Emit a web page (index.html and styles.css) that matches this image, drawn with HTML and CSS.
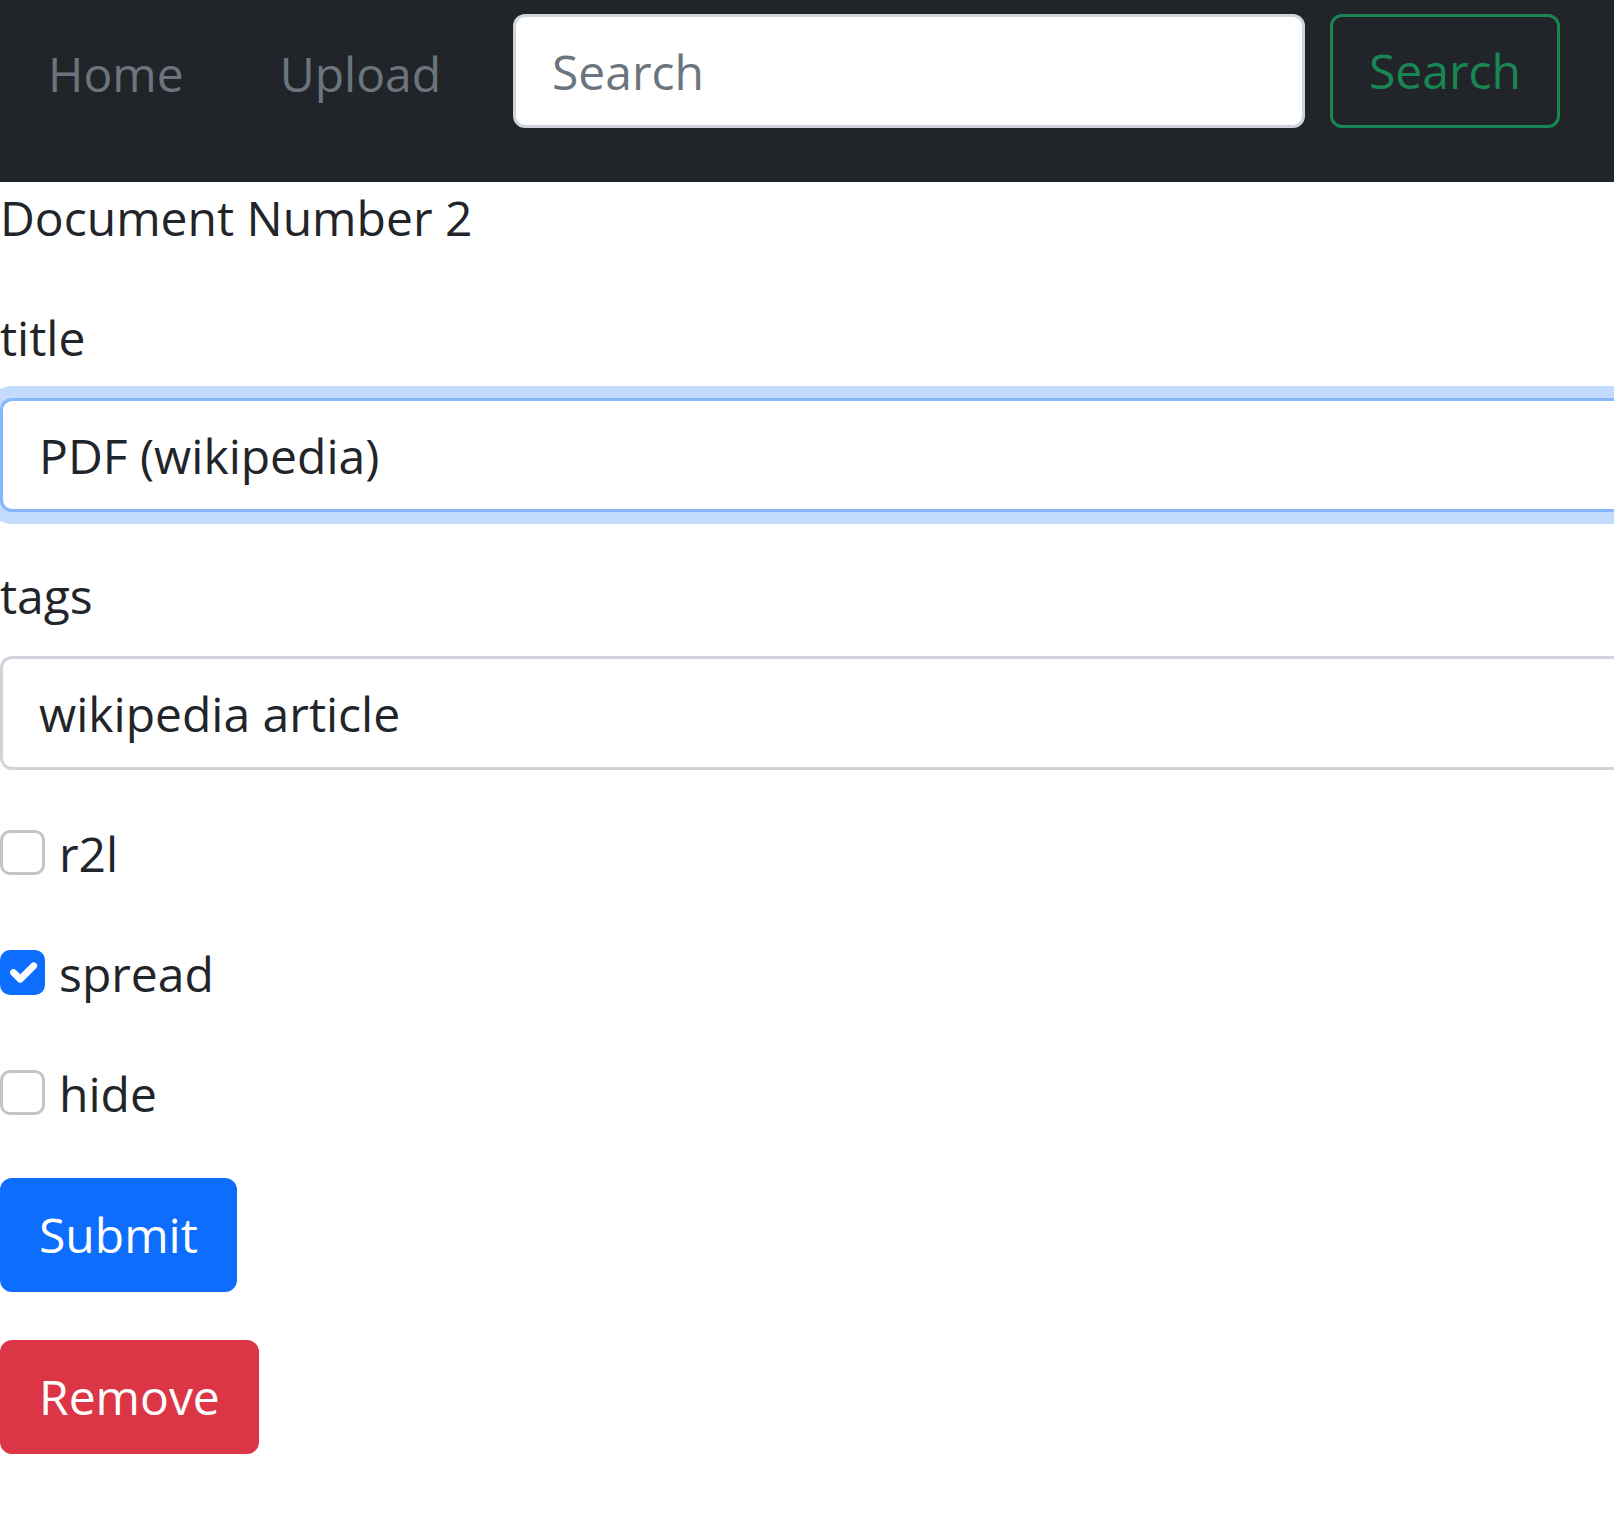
FILE: index.html
```html
<!DOCTYPE html>
<html lang="en">
<head>
<meta charset="utf-8">
<title>Document Number 2</title>
<link rel="stylesheet" href="styles.css">
</head>
<body>
<nav class="navbar">
  <a class="nav-link" href="#">Home</a>
  <a class="nav-link" href="#">Upload</a>
  <form class="search-form">
    <input class="form-control search-input" type="search" placeholder="Search">
    <button class="btn btn-outline-success" type="button">Search</button>
  </form>
</nav>
<main class="main">
  <div class="doc-title">Document Number 2</div>
  <form class="edit-form">
    <div class="field">
      <label class="form-label" for="title">title</label>
      <input class="form-control wide is-focused" id="title" type="text" value="PDF (wikipedia)">
    </div>
    <div class="field">
      <label class="form-label" for="tags">tags</label>
      <input class="form-control wide" id="tags" type="text" value="wikipedia article">
    </div>
    <div class="check">
      <span class="check-box"></span>
      <span class="check-label">r2l</span>
    </div>
    <div class="check">
      <span class="check-box checked">
        <svg viewBox="0 0 20 20" width="45" height="45"><path d="m6 10 3 3 6-6" fill="none" stroke="#fff" stroke-width="3" stroke-linecap="round" stroke-linejoin="round"/></svg>
      </span>
      <span class="check-label">spread</span>
    </div>
    <div class="check">
      <span class="check-box"></span>
      <span class="check-label">hide</span>
    </div>
    <div class="actions">
      <button class="btn btn-primary" type="button">Submit</button>
      <button class="btn btn-danger" type="button">Remove</button>
    </div>
  </form>
</main>
</body>
</html>
```
FILE: styles.css
```css
html {
  overflow-x: hidden;
}
body {
  margin: 0;
  font-family: "Open Sans", "Noto Sans", sans-serif;
  font-size: 48px;
  line-height: 1.5;
  color: #212529;
  background: #fff;
}
.navbar {
  display: flex;
  align-items: flex-start;
  gap: 48px;
  height: 182px;
  box-sizing: border-box;
  padding: 14px 0 0 24px;
  background: #212529;
}
.nav-link {
  margin-top: 24px;
  padding: 0 24px;
  color: #6c757d;
  text-decoration: none;
}
.search-form {
  display: flex;
  gap: 25px;
  margin: 0;
}
.form-control {
  display: block;
  box-sizing: border-box;
  font: inherit;
  color: #212529;
  background: #fff;
  border: 3px solid #ced4da;
  border-radius: 12px;
  padding: 18px 36px;
  height: 114px;
  outline: none;
}
.form-control::placeholder {
  color: #6c757d;
}
.search-input {
  width: 792px;
}
.btn {
  box-sizing: border-box;
  font: inherit;
  height: 114px;
  padding: 18px 36px;
  border: 3px solid transparent;
  border-radius: 12px;
  cursor: pointer;
}
.btn-outline-success {
  color: #198754;
  background: transparent;
  border-color: #198754;
}
.btn-primary {
  color: #fff;
  background: #0d6efd;
  border-color: #0d6efd;
}
.btn-danger {
  color: #fff;
  background: #dc3545;
  border-color: #dc3545;
}
.doc-title {
  margin-bottom: 48px;
}
.edit-form {
  margin: 0;
}
.field {
  margin-bottom: 48px;
}
.form-label {
  display: block;
  margin-bottom: 24px;
}
/* the wide inputs continue past the right edge of the window */
.form-control.wide {
  width: 100%;
  border-right: none;
  border-radius: 12px 0 0 12px;
}
.is-focused {
  border-color: #86b7fe;
  box-shadow: 0 0 0 12px rgba(13, 110, 253, 0.25);
}
.check {
  display: flex;
  align-items: flex-start;
  gap: 14px;
  margin-bottom: 48px;
}
.check-box {
  box-sizing: border-box;
  flex: none;
  width: 45px;
  height: 45px;
  margin-top: 12px;
  border: 3px solid #c4c4c4;
  border-radius: 10px;
  background: #fff;
}
.check-box.checked {
  border: none;
  background: #0d6efd;
}
.check-box svg {
  display: block;
}
.actions {
  display: flex;
  flex-direction: column;
  align-items: flex-start;
  gap: 48px;
}
```
